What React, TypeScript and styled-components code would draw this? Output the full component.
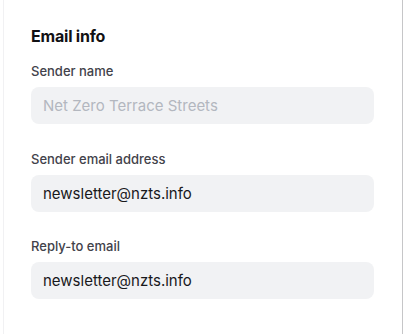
import styled, { createGlobalStyle } from 'styled-components'

const GlobalStyle = createGlobalStyle`
  html, body {
    margin: 0;
    padding: 0;
    background: #ffffff;
  }

  body {
    font-family: Inter, 'Noto Sans', sans-serif;
    -webkit-font-smoothing: antialiased;
  }
`

const Page = styled.div`
  display: flex;
  width: 403px;
  height: 334px;
  padding-left: 3px;
  box-sizing: border-box;
`

const Card = styled.section`
  flex: 1;
  display: flex;
  flex-direction: column;
  padding: 24px 27px 0 27px;
  border-left: 1px solid #f1f1f3;
  border-right: 1px solid #c6c6c8;
  background: #ffffff;
`

const Title = styled.h2`
  margin: 0 0 15px;
  font-size: 16px;
  line-height: 24px;
  font-weight: 700;
  letter-spacing: -0.2px;
  color: #111114;
`

const Field = styled.label`
  display: flex;
  flex-direction: column;
  gap: 8px;
  margin-bottom: 26.5px;
`

const Label = styled.span`
  font-size: 13px;
  line-height: 16px;
  font-weight: 500;
  color: #42424a;
`

interface InputProps {
  $muted?: boolean
}

const Input = styled.input<InputProps>`
  box-sizing: border-box;
  width: 343px;
  height: 37px;
  padding: 0 12px;
  border: 0;
  border-radius: 8px;
  background: #f1f2f4;
  font-family: Inter, 'Noto Sans', sans-serif;
  font-size: 15px;
  color: ${({ $muted }) => ($muted ? '#b3b7bf' : '#18181b')};
  outline: none;

  &:disabled {
    -webkit-text-fill-color: #b3b7bf;
    opacity: 1;
  }
`

const fields = [
  { label: 'Sender name', value: 'Net Zero Terrace Streets', muted: true },
  { label: 'Sender email address', value: 'newsletter@nzts.info' },
  { label: 'Reply-to email', value: 'newsletter@nzts.info' },
]

export default function App() {
  return (
    <>
      <GlobalStyle />
      <Page>
        <Card>
          <Title>Email info</Title>
          {fields.map((f) => (
            <Field key={f.label}>
              <Label>{f.label}</Label>
              <Input
                $muted={f.muted}
                disabled={f.muted}
                defaultValue={f.value}
                readOnly={!f.muted}
              />
            </Field>
          ))}
        </Card>
      </Page>
    </>
  )
}
